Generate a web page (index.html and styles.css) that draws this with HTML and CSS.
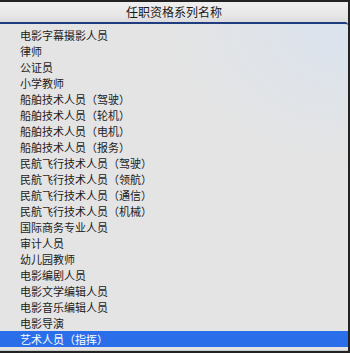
FILE: index.html
```html
<!DOCTYPE html>
<html lang="zh-CN">
<head>
    <meta charset="utf-8">
    <title>任职资格系列名称</title>
    <link rel="stylesheet" href="styles.css">
</head>
<body>

    <div class="picker">
        <div class="picker__header">任职资格系列名称</div>
        <ul class="picker__list">
            <li class="picker__item">电影字幕摄影人员</li>
            <li class="picker__item">律师</li>
            <li class="picker__item">公证员</li>
            <li class="picker__item">小学教师</li>
            <li class="picker__item">船舶技术人员（驾驶）</li>
            <li class="picker__item">船舶技术人员（轮机）</li>
            <li class="picker__item">船舶技术人员（电机）</li>
            <li class="picker__item">船舶技术人员（报务）</li>
            <li class="picker__item">民航飞行技术人员（驾驶）</li>
            <li class="picker__item">民航飞行技术人员（领航）</li>
            <li class="picker__item">民航飞行技术人员（通信）</li>
            <li class="picker__item">民航飞行技术人员（机械）</li>
            <li class="picker__item">国际商务专业人员</li>
            <li class="picker__item">审计人员</li>
            <li class="picker__item">幼儿园教师</li>
            <li class="picker__item">电影编剧人员</li>
            <li class="picker__item">电影文学编辑人员</li>
            <li class="picker__item">电影音乐编辑人员</li>
            <li class="picker__item">电影导演</li>
            <li class="picker__item active">艺术人员（指挥）</li>
        </ul>
    </div>

</body>
</html>
```

FILE: styles.css
```css
* {
    box-sizing: border-box;
}

body {
    background-color: #232323;
    margin: 0;
    padding: 2px 0 0 0;
    font-family: "Noto Sans CJK SC", "Noto Sans", sans-serif;
    color: #1c1c1c;
}

.picker {
    width: 348px;
    height: 349px;
    display: flex;
    flex-direction: column;
    background-color: #e4e4e4;
}

.picker__header {
    height: 20px;
    line-height: 20px;
    text-align: center;
    font-size: 12px;
    color: #1a1a1a;
    background: linear-gradient(#efefef, #e6e6e6 70%, #dcdcdc);
}

.picker__list {
    list-style-type: none;
    margin: 0;
    padding: 3px 0 0 0;
    flex: 1;
    border-top: 2px solid #1f3c80;
    border-top-right-radius: 3px;
    background:
        radial-gradient(ellipse 180px 140px at 100% 0, #dbe3ee, rgba(228,228,228,0)),
        #e4e4e4;
    border-bottom: 1px solid #c8c8c8;
}

.picker__item {
    height: 16px;
    line-height: 16px;
    font-size: 11px;
    padding-left: 20px;
    white-space: nowrap;
}

.picker__item.active {
    background-color: #2a6fe9;
    color: #fff;
}
```
